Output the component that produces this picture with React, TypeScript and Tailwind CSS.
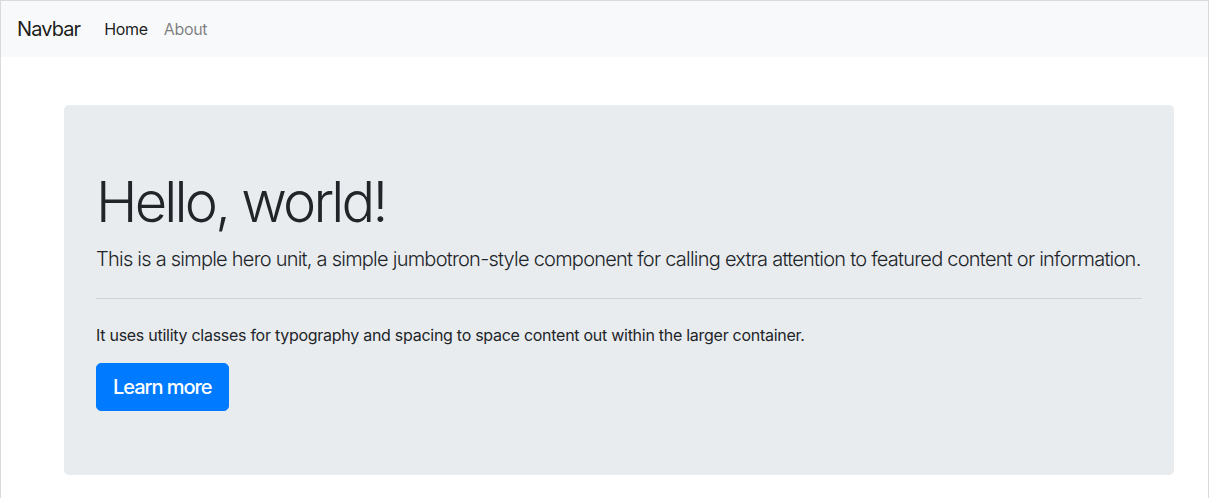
export default function App() {
  return (
    <div
      className="min-h-[498px] bg-white border-t border-l border-r border-[#d9d9de] text-[#212529]"
      style={{ fontFamily: 'Inter, "Noto Sans", "Liberation Sans", sans-serif' }}
    >
      <nav className="flex items-center bg-[#f8f9fa] px-4 py-2 h-[56px]">
        <a href="#" className="mr-4 py-[5px] text-[20px] leading-[30px] tracking-[-0.045em] text-black/90">
          Navbar
        </a>
        <div className="flex">
          <a href="#" className="px-2 text-[16px] leading-6 tracking-[-0.02em] text-black/90">
            Home
          </a>
          <a href="#" className="px-2 text-[16px] leading-6 tracking-[-0.02em] text-black/50">
            About
          </a>
        </div>
      </nav>

      <main className="ml-[63px] mt-[48px] w-[1110px]">
        <div className="rounded-[5px] bg-[#e9ecef] px-8 py-16">
          <h1 className="text-[56px] font-light leading-[67px] tracking-[-0.05em] mb-2">Hello, world!</h1>
          <p className="text-[20px] font-[350] leading-[30px] tracking-[-0.038em] whitespace-nowrap">
            This is a simple hero unit, a simple jumbotron-style component for calling extra attention to featured content or information.
          </p>
          <hr className="my-6 border-t border-black/10" />
          <p className="text-[16px] leading-6 tracking-[-0.017em] mb-4">
            It uses utility classes for typography and spacing to space content out within the larger container.
          </p>
          <a
            href="#"
            className="inline-block rounded-[5px] border border-[#007bff] bg-[#007bff] px-4 py-2 text-[20px] font-medium leading-[30px] tracking-[-0.052em] text-white"
          >
            Learn more
          </a>
        </div>
      </main>
    </div>
  );
}
